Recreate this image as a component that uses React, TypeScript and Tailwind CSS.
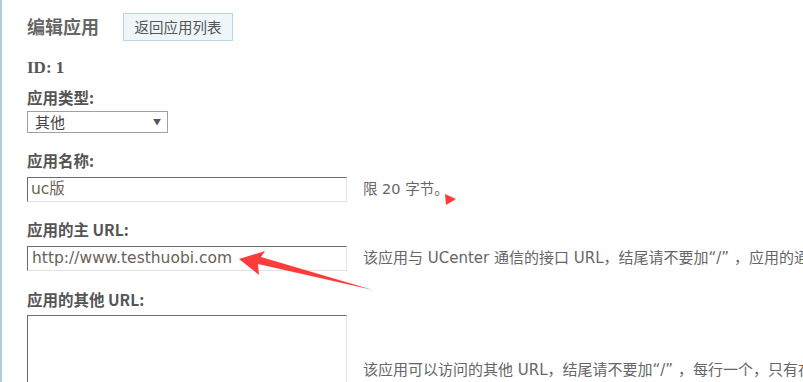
import React from "react";

const labelFont = { fontFamily: '"Noto Sans CJK SC", sans-serif' };
const idFont = { fontFamily: '"Liberation Serif", "Noto Sans CJK SC", serif' };
const cjk = { fontFamily: '"Noto Sans CJK SC", sans-serif' };

export default function App() {
  return (
    <div className="relative w-[803px] h-[382px] overflow-hidden bg-white border-l-2 border-[#aecdd9]" style={{ fontFamily: '"DejaVu Sans", "Noto Sans CJK SC", sans-serif' }}>
      <div className="pl-[25px] pt-[13px]">
        <div className="flex items-center h-[27px]">
          <div className="w-[96px] text-[18px] font-bold text-[#666] leading-[27px]" style={cjk}>编辑应用</div>
          <div className="h-[28px] w-[110px] shrink-0 border border-[#b6d5df] bg-[#eef6fa] flex items-center justify-center text-[14.5px] text-[#555]" style={cjk}>返回应用列表</div>
        </div>

        <div className="mt-[18px] h-[20px] leading-[20px] text-[17px] font-bold text-[#555]" style={idFont}>ID: 1</div>
        <div className="mt-[9px] h-[20px] leading-[20px] text-[15.5px] font-bold text-[#555]" style={labelFont}>应用类型:</div>
        <div className="mt-[4px] w-[141px] h-[22px] border border-[#a0a0a0] flex items-center justify-between pl-[7px] pr-[6px] text-[15px] text-[#444]" style={cjk}>
          <span>其他</span>
          <span className="text-[8px] text-[#555]">▼</span>
        </div>

        <div className="mt-[17px] h-[20px] leading-[20px] text-[15.5px] font-bold text-[#555]" style={labelFont}>应用名称:</div>
        <div className="mt-[7px] flex items-center">
          <div className="w-[320px] h-[25px] shrink-0 border-t border-l border-[#6b6b6b] border-r border-b border-r-[#e3e3e3] border-b-[#e3e3e3] flex items-center pl-[3px] text-[15.5px] text-[#6a6257]">uc版</div>
          <div className="ml-[16px] text-[14.5px] text-[#666] whitespace-nowrap">限 20 字节。</div>
        </div>

        <div className="mt-[17px] h-[20px] leading-[20px] text-[15.5px] font-bold text-[#555]" style={labelFont}>应用的主 URL:</div>
        <div className="mt-[7px] flex items-center">
          <div className="w-[320px] h-[25px] shrink-0 border-t border-l border-[#6b6b6b] border-r border-b border-r-[#e3e3e3] border-b-[#e3e3e3] flex items-center pl-[4px] text-[15.5px] text-[#6a6257] whitespace-nowrap">http://www.testhuobi.com</div>
          <div className="ml-[16px] text-[15px] text-[#666] whitespace-nowrap">该应用与 UCenter 通信的接口 URL，结尾请不要加“/” ，应用的通</div>
        </div>

        <div className="mt-[18px] h-[20px] leading-[20px] text-[15.5px] font-bold text-[#555]" style={labelFont}>应用的其他 URL:</div>
        <div className="mt-[6px] flex items-center">
          <div className="w-[320px] h-[110px] shrink-0 border-t border-l border-[#6b6b6b] border-r border-b border-r-[#e3e3e3] border-b-[#e3e3e3]"></div>
          <div className="ml-[16px] text-[15px] text-[#666] whitespace-nowrap">该应用可以访问的其他 URL，结尾请不要加“/” ，每行一个，只有在</div>
        </div>
      </div>

      <svg className="absolute left-0 top-0 pointer-events-none" width="803" height="382" viewBox="0 0 803 382">
        <polygon points="237,259 263,251 259,257 371,290 256,264 257,275" fill="#ff3b3b" />
        <polygon points="443,194 454,199 444,205" fill="#ff3b3b" />
      </svg>
    </div>
  );
}
